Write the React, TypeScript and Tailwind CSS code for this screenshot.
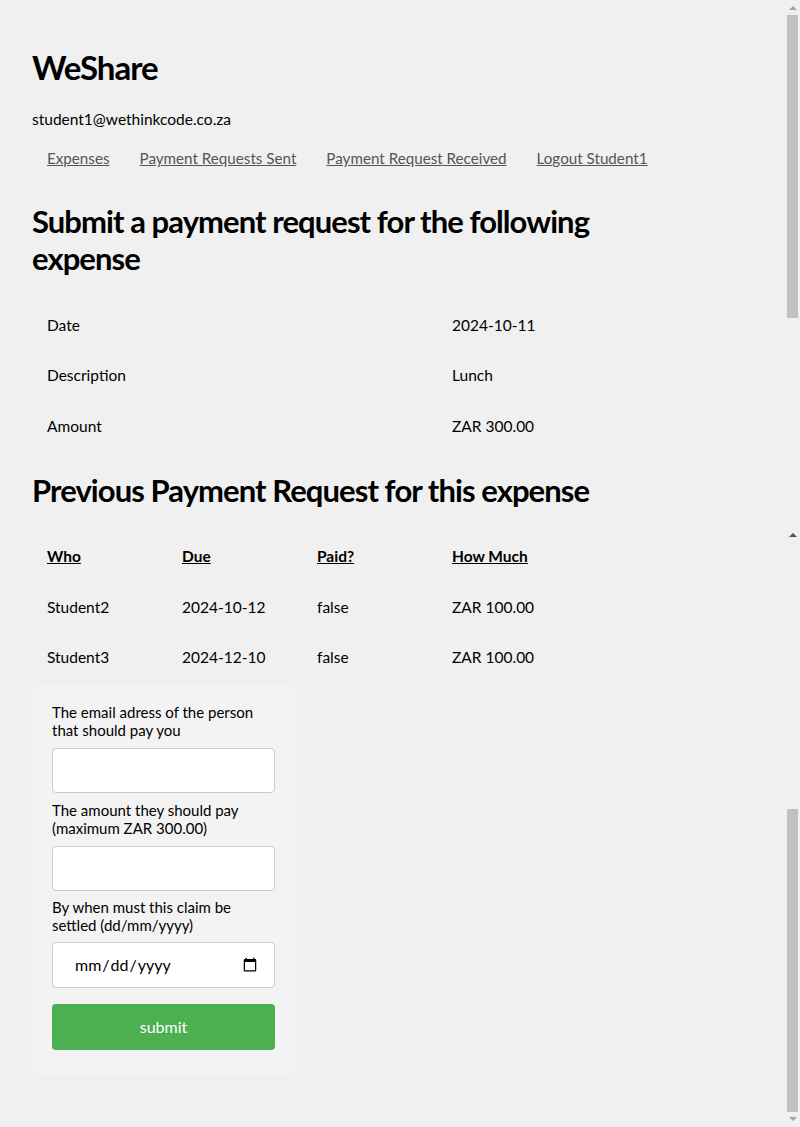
import React from "react";

function Scrollbar() {
  return (
    <div className="absolute right-0 top-0 w-[15px] h-[1127px] bg-[#f0f0f0]">
      <div className="absolute left-[4px] top-[6px] w-0 h-0 border-l-[4px] border-r-[4px] border-b-[4px] border-l-transparent border-r-transparent border-b-[#a3a3a3]" />
      <div className="absolute left-[2px] top-[15px] w-[11px] h-[303px] bg-[#c1c1c1]" />
      <div className="absolute left-[4px] top-[533px] w-0 h-0 border-l-[4px] border-r-[4px] border-b-[4px] border-l-transparent border-r-transparent border-b-[#505050]" />
      <div className="absolute left-[2px] top-[809px] w-[11px] h-[303px] bg-[#c1c1c1]" />
      <div className="absolute left-[4px] top-[1117px] w-0 h-0 border-l-[4px] border-r-[4px] border-t-[4px] border-l-transparent border-r-transparent border-t-[#a3a3a3]" />
    </div>
  );
}

const head = "font-['Lato',sans-serif] font-bold tracking-[-0.03em]";

export default function App() {
  const nav = ["Expenses", "Payment Requests Sent", "Payment Request Received", "Logout Student1"];
  const rows = [
    ["Student2", "2024-10-12", "false", "ZAR 100.00"],
    ["Student3", "2024-12-10", "false", "ZAR 100.00"],
  ];
  return (
    <div className="relative min-h-[1127px] bg-[#f0f0f0] text-black font-['Lato',sans-serif] text-[15.5px]">
      <div className="pl-8 pt-[48px] pb-[50px] w-[700px]">
        <h1 className={`${head} text-[33px] leading-[38px]`}>WeShare</h1>
        <div className="mt-[23px] leading-[20px]">student1@wethinkcode.co.za</div>
        <nav className="mt-[19px] flex leading-[20px] whitespace-nowrap text-[15.2px]">
          {nav.map((n) => (
            <a key={n} href="#" className="px-[15px] text-[#555] underline">
              {n}
            </a>
          ))}
        </nav>
        <h2 className={`${head} mt-[35px] text-[31px] leading-[37px] w-[630px]`}>
          Submit a payment request for the following expense
        </h2>
        <table className="mt-[23px] table-fixed w-[540px] border-collapse">
          <colgroup>
            <col className="w-[405px]" />
            <col className="w-[135px]" />
          </colgroup>
          <tbody>
            {[
              ["Date", "2024-10-11"],
              ["Description", "Lunch"],
              ["Amount", "ZAR 300.00"],
            ].map(([k, v]) => (
              <tr key={k} className="h-[50.5px]">
                <td className="px-[15px]">{k}</td>
                <td className="px-[15px] whitespace-nowrap">{v}</td>
              </tr>
            ))}
          </tbody>
        </table>
        <h2 className={`${head} mt-[20px] text-[31px] leading-[37px] w-[630px]`}>
          Previous Payment Request for this expense
        </h2>
        <table className="mt-[23px] table-fixed w-[540px] border-collapse">
          <thead>
            <tr className="h-[50.5px]">
              {["Who", "Due", "Paid?", "How Much"].map((h) => (
                <th key={h} className="px-[15px] text-left font-bold underline">
                  {h}
                </th>
              ))}
            </tr>
          </thead>
          <tbody>
            {rows.map((r) => (
              <tr key={r[0]} className="h-[50.5px]">
                {r.map((c, i) => (
                  <td key={i} className="px-[15px] whitespace-nowrap">
                    {c}
                  </td>
                ))}
              </tr>
            ))}
          </tbody>
        </table>
        <form
          className="mt-[2px] w-[263px] rounded-[10px] bg-[#f3f3f3] px-5 pt-[18px] pb-[25px] flex flex-col text-[15px] leading-[18px]"
          onSubmit={(e) => e.preventDefault()}
        >
          <label>The email adress of the person that should pay you</label>
          <input className="mt-[9px] mb-[8px] h-[45px] rounded-[4px] border border-[#ccc] bg-white px-3" />
          <label>The amount they should pay (maximum ZAR 300.00)</label>
          <input className="mt-[9px] mb-[7px] h-[45px] rounded-[4px] border border-[#ccc] bg-white px-3" />
          <label>By when must this claim be settled (dd/mm/yyyy)</label>
          <input
            type="date"
            className="mt-[8px] h-[46px] rounded-[4px] border border-[#ccc] bg-white pl-[21px] pr-[14px] text-[16px]"
          />
          <button
            type="submit"
            className="mt-[16px] h-[46px] rounded-[4px] bg-[#4caf50] text-white text-[16px]"
          >
            submit
          </button>
        </form>
      </div>
      <Scrollbar />
    </div>
  );
}
